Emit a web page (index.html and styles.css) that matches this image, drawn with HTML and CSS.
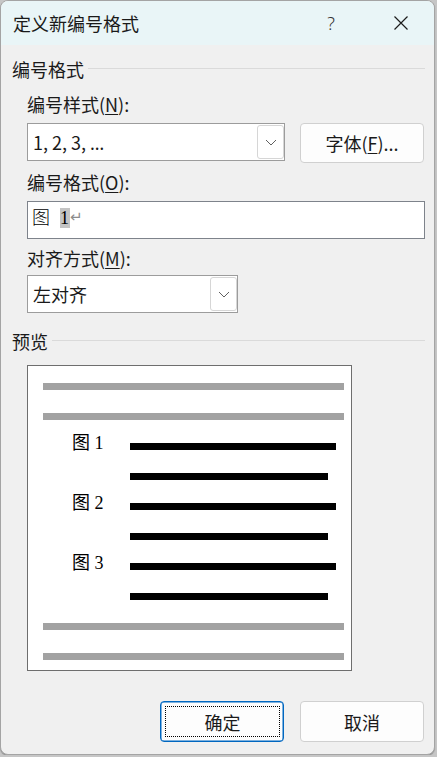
FILE: index.html
```html
<!DOCTYPE html>
<html lang="zh-CN">
<head>
<meta charset="utf-8">
<title>定义新编号格式</title>
<link rel="stylesheet" href="styles.css">
</head>
<body>
<div class="window">
  <div class="titlebar">
    <span class="title">定义新编号格式</span>
    <span class="help">?</span>
    <span class="close">
      <svg width="16" height="16" viewBox="0 0 16 16"><path d="M1.5 1.5 L14.5 14.5 M14.5 1.5 L1.5 14.5" stroke="#1c1c1c" stroke-width="1.2" fill="none"/></svg>
    </span>
  </div>
  <div class="content">
    <div class="group-head g-first"><span>编号格式</span><div class="rule"></div></div>
    <div class="field-label l-style">编号样式(<u>N</u>):</div>
    <div class="row">
      <div class="combo combo-wide">
        <span class="combo-text">1, 2, 3, <span class="ell">…</span></span>
        <span class="drop"><svg width="12" height="7" viewBox="0 0 12 7"><path d="M1 1 L6 6 L11 1" stroke="#606060" stroke-width="1" fill="none"/></svg></span>
      </div>
      <button class="btn btn-font">字体(<u>F</u>)...</button>
    </div>
    <div class="field-label l-format">编号格式(<u>O</u>):</div>
    <div class="input">
      <span class="in-fig">图</span><span class="in-sel">1</span><span class="in-ret">↵</span>
    </div>
    <div class="field-label l-align">对齐方式(<u>M</u>):</div>
    <div class="combo combo-narrow">
      <span class="combo-text">左对齐</span>
      <span class="drop"><svg width="12" height="7" viewBox="0 0 12 7"><path d="M1 1 L6 6 L11 1" stroke="#606060" stroke-width="1" fill="none"/></svg></span>
    </div>
    <div class="group-head g-preview"><span>预览</span><div class="rule"></div></div>
    <div class="preview">
      <div class="pv-gray"></div>
      <div class="pv-gray"></div>
      <div class="pv-item"><span class="pv-label">图 1</span><span class="pv-bar long"></span></div>
      <div class="pv-item"><span class="pv-label"></span><span class="pv-bar short"></span></div>
      <div class="pv-item"><span class="pv-label">图 2</span><span class="pv-bar long"></span></div>
      <div class="pv-item"><span class="pv-label"></span><span class="pv-bar short"></span></div>
      <div class="pv-item"><span class="pv-label">图 3</span><span class="pv-bar long"></span></div>
      <div class="pv-item"><span class="pv-label"></span><span class="pv-bar short"></span></div>
      <div class="pv-gray"></div>
      <div class="pv-gray"></div>
    </div>
    <div class="actions">
      <button class="btn btn-ok"><span class="focus">确定</span></button>
      <button class="btn btn-cancel">取消</button>
    </div>
  </div>
</div>
</body>
</html>
```
FILE: styles.css
```css
* { box-sizing: border-box; }
html, body { margin: 0; padding: 0; }
body {
  background: #c6c6c6;
  font-family: "Noto Sans CJK SC", "Noto Sans", sans-serif;
  font-size: 18px;
  color: #1a1a1a;
}
.window {
  width: 435px;
  height: 755px;
  border: 1px solid #a4a4a4;
  border-radius: 8px;
  overflow: hidden;
  background: #f0f0f0;
  box-shadow: 0 1px 1px rgba(0,0,0,0.25);
}
.titlebar {
  height: 44px;
  background: #e9f5f7;
  display: flex;
  align-items: center;
  padding: 0 10px 0 12px;
}
.title {
  flex: 1;
  line-height: 24px;
  color: #1a1a1a;
}
.help {
  width: 46px;
  margin-right: 24px;
  text-align: center;
  font-family: "Noto Sans", sans-serif;
  font-weight: 300;
  font-size: 18px;
  color: #333;
}
.close {
  width: 46px;
  display: flex;
  justify-content: center;
  align-items: center;
}
.content {
  padding: 0 9px 0 11px;
  display: flex;
  flex-direction: column;
}
.group-head {
  display: flex;
  align-items: center;
  gap: 4px;
  line-height: 24px;
  height: 24px;
}
.group-head .rule {
  flex: 1;
  height: 1px;
  background: #dadada;
  margin-top: -1px;
}
.g-first { margin-top: 12px; }
.g-preview { margin-top: 16px; }
.field-label {
  margin-left: 15px;
  line-height: 24px;
  height: 24px;
}
.field-label u { text-underline-offset: 2px; text-decoration-thickness: 1px; }
.l-style { margin-top: 11px; }
.l-format { margin-top: 7px; }
.l-align { margin-top: 7px; }
.row {
  margin-top: 7px;
  margin-left: 15px;
  margin-right: 1px;
  display: flex;
  align-items: flex-start;
}
.combo {
  height: 38px;
  border: 1px solid #9c9c9c;
  background: #fff;
  display: flex;
  align-items: center;
  padding: 1px 0 1px 1px;
}
.combo-wide { width: 258px; }
.combo-narrow { width: 211px; margin-left: 15px; margin-top: 5px; }
.combo-text {
  flex: 1;
  padding-left: 4px;
  line-height: 24px;
}
.ell { font-family: "Noto Sans", sans-serif; }
.drop {
  width: 27px;
  height: 34px;
  border: 1px solid #d6d6d6;
  border-radius: 3px;
  background: #fff;
  display: flex;
  align-items: center;
  justify-content: center;
}
.btn {
  font-family: "Noto Sans CJK SC", "Noto Sans", sans-serif;
  font-size: 18px;
  color: #1a1a1a;
  width: 124px;
  background: #fdfdfd;
  border: 1px solid #d0d0d0;
  border-radius: 4px;
  padding: 0;
  display: flex;
  align-items: center;
  justify-content: center;
}
.btn u { text-underline-offset: 2px; text-decoration-thickness: 1px; }
.btn-font {
  height: 40px;
  margin-left: auto;
}
.input {
  margin-top: 7px;
  margin-left: 15px;
  height: 38px;
  border: 1px solid #7e838b;
  background: #fff;
  padding: 5px 4px 0 4px;
  font-family: "Liberation Serif", "Noto Sans CJK SC", serif;
  font-size: 18px;
  line-height: 20px;
  color: #000;
  white-space: nowrap;
}
.in-fig {
  margin-right: 10px;
  font-family: "Noto Sans CJK SC", sans-serif;
  font-weight: 300;
  line-height: 1;
}
.in-sel {
  background: #c4c4c4;
  padding-right: 1px;
}
.in-ret {
  font-family: "DejaVu Sans", sans-serif;
  font-size: 15px;
  color: #8c8c8c;
  vertical-align: 2px;
}
.preview {
  margin-top: 12px;
  margin-left: 15px;
  width: 325px;
  height: 306px;
  border: 1px solid #6e6e6e;
  background: #fff;
  padding: 17px 6px 10px 15px;
  display: flex;
  flex-direction: column;
  gap: 23px;
}
.pv-gray {
  height: 7px;
  width: 301px;
  background: #a2a2a2;
}
.pv-item {
  height: 7px;
  display: flex;
  align-items: flex-start;
}
.pv-label {
  width: 87px;
  height: 20px;
  margin-top: -10px;
  padding-left: 29px;
  font-family: "Liberation Serif", "Noto Sans CJK SC", serif;
  font-size: 18px;
  line-height: 20px;
  color: #000;
  white-space: nowrap;
}
.pv-bar {
  height: 7px;
  background: #000;
}
.pv-bar.long { width: 206px; }
.pv-bar.short { width: 198px; }
.actions {
  margin-top: 30px;
  margin-right: 1px;
  display: flex;
  justify-content: flex-end;
  gap: 16px;
}
.btn-ok, .btn-cancel { height: 41px; }
.btn-ok {
  border: 1px solid #0067c0;
  box-shadow: inset 0 0 0 0.5px #0067c0;
  padding: 4px 3px 4px 4px;
  align-items: stretch;
}
.focus {
  flex: 1;
  border: 1px dotted #000;
  display: flex;
  align-items: center;
  justify-content: center;
}
```
